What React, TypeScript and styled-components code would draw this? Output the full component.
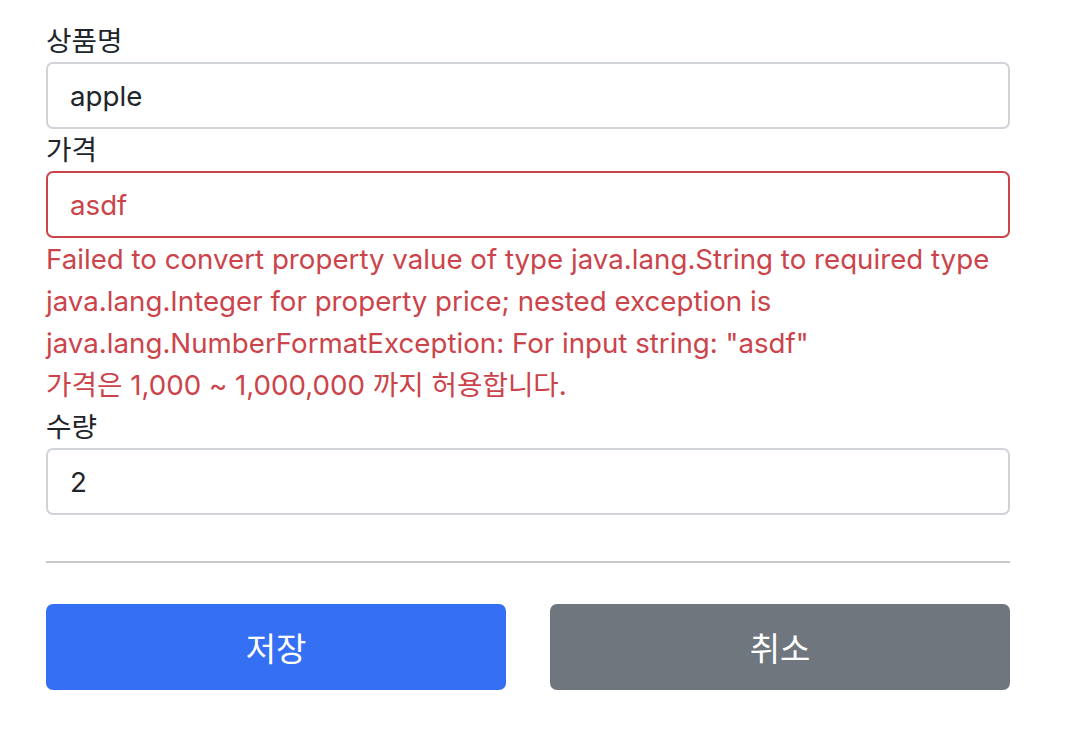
import React from "react";
import styled, { createGlobalStyle } from "styled-components";

const RED = "#cb444b";
const TEXT = "#212529";

const GlobalStyle = createGlobalStyle`
	body {
		margin: 0;
		background: #ffffff;
		font-family: Inter, "Noto Sans CJK KR", sans-serif;
		color: ${TEXT};
	}
	* {
		box-sizing: border-box;
	}
`;

const Container = styled.div`
	width: 964px;
	margin-left: 46px;
	padding-top: 20px;
	font-size: 27.7px;
	line-height: 42px;
`;

const Label = styled.label`
	display: block;
`;

interface InputProps {
	$invalid?: boolean;
}

const Input = styled.input<InputProps>`
	display: block;
	width: 100%;
	height: 67px;
	padding: 0 22px;
	font: inherit;
	color: ${(p) => (p.$invalid ? RED : TEXT)};
	border: 2px solid ${(p) => (p.$invalid ? RED : "#d0d4d9")};
	border-radius: 7px;
	background: #ffffff;
	outline: none;
`;

const FieldError = styled.div`
	color: ${RED};
`;

const Divider = styled.hr`
	margin: 46px 0 41px;
	border: 0;
	border-top: 2px solid #c8c9ca;
`;

const ButtonRow = styled.div`
	display: flex;
	gap: 44px;
`;

interface ButtonProps {
	$variant: "primary" | "secondary";
}

const Button = styled.button<ButtonProps>`
	flex: 1;
	height: 86px;
	border: 0;
	border-radius: 7px;
	font-family: Inter, "Noto Sans CJK KR", sans-serif;
	font-size: 33px;
	color: #ffffff;
	background: ${(p) => (p.$variant === "primary" ? "#346ff4" : "#70767e")};
	cursor: pointer;
`;

export default function App() {
	return (
		<>
			<GlobalStyle />
			<Container>
				<form onSubmit={(e) => e.preventDefault()}>
					<div>
						<Label htmlFor="itemName">상품명</Label>
						<Input id="itemName" defaultValue="apple" />
					</div>
					<div>
						<Label htmlFor="price">가격</Label>
						<Input id="price" defaultValue="asdf" $invalid />
						<FieldError>
							Failed to convert property value of type java.lang.String to required type
							java.lang.Integer for property price; nested exception is
							java.lang.NumberFormatException: For input string: "asdf"
						</FieldError>
						<FieldError>가격은 1,000 ~ 1,000,000 까지 허용합니다.</FieldError>
					</div>
					<div>
						<Label htmlFor="quantity">수량</Label>
						<Input id="quantity" defaultValue="2" />
					</div>

					<Divider />

					<ButtonRow>
						<Button type="submit" $variant="primary">
							저장
						</Button>
						<Button type="button" $variant="secondary">
							취소
						</Button>
					</ButtonRow>
				</form>
			</Container>
		</>
	);
}
